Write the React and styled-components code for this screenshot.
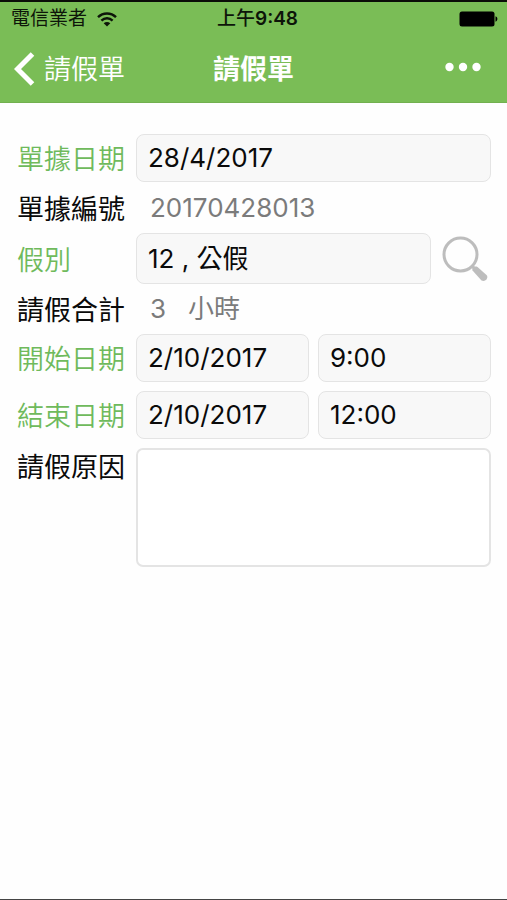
import { useState } from "react";
import styled, { createGlobalStyle } from "styled-components";

const GlobalStyle = createGlobalStyle`
  * {
    box-sizing: border-box;
  }

  body {
    margin: 0;
    background: #fefefe;
    font-family: Inter, "Noto Sans CJK TC", sans-serif;
    color: #0a0a0a;
  }

  input, textarea, button {
    font-family: inherit;
    color: inherit;
  }
`;

const Screen = styled.div`
  min-height: 100vh;
  border-top: 2px solid #0b0e08;
  border-bottom: 1px solid #444;
`;

const Header = styled.header`
  background: #7abd56;
  border-bottom: 1px solid #72b04f;
  color: white;
`;

const StatusBar = styled.div`
  display: grid;
  grid-template-columns: 1fr auto 1fr;
  align-items: center;
  height: 33px;
  padding: 0 9px 0 11px;
  color: #0d1509;
  font-size: 19px;
  line-height: 34px;
`;

const Carrier = styled.span`
  display: flex;
  align-items: center;
  gap: 10px;
`;

const Clock = styled.time`
  padding-left: 6px;
  font-weight: 500;
`;

const Digits = styled.span`
  font-weight: 600;
`;

const Battery = styled.svg`
  justify-self: end;
`;

const NavBar = styled.nav`
  display: grid;
  grid-template-columns: 1fr auto 1fr;
  align-items: center;
  height: 67px;
  padding: 0 14px;
`;

const BackLink = styled.a`
  display: flex;
  align-items: center;
  gap: 9px;
  padding-top: 2px;
  color: white;
  font-size: 27px;
  font-weight: 350;
  line-height: 40px;
  text-decoration: none;
`;

const Title = styled.h1`
  margin: 0;
  padding-top: 2px;
  font-size: 27px;
  font-weight: 700;
  line-height: 40px;
`;

const IconButton = styled.button`
  display: flex;
  justify-self: end;
  padding: 0;
  border: none;
  background: none;
  cursor: pointer;
`;

const MenuButton = styled(IconButton)`
  padding: 10px 12px 14px;
`;

const Form = styled.form`
  padding: 31px 16px 31px 17px;
`;

const Row = styled.div`
  display: grid;
  grid-template-columns: 110px minmax(0, 1fr);
  align-items: ${(props) => (props.$top ? "start" : "center")};
  gap: 9px;
  margin-bottom: ${(props) => (props.$gap ? 9 : 0)}px;
`;

const Label = styled.label`
  padding-top: 4px;
  color: ${(props) => (props.$required ? "#6fba5c" : "#0a0a0a")};
  font-size: 27px;
  font-weight: ${(props) => (props.$required ? 350 : 400)};
  line-height: 32px;
  white-space: nowrap;
`;

const Fields = styled.div`
  display: flex;
  align-items: center;
  gap: 9px;
`;

const Input = styled.input`
  flex: 1;
  width: 100%;
  min-width: 0;
  height: ${(props) => (props.$tall ? 51 : 48)}px;
  padding: 0 11px ${(props) => (props.$tall ? 4 : 2)}px;
  border: 1px solid #e4e4e4;
  border-radius: 8px;
  background: #f8f8f8;
  font-size: 26px;
  outline: none;
`;

const Value = styled.output`
  padding-left: 14px;
  color: #7b7b7b;
  font-size: 26px;
  font-weight: 400;
  line-height: ${(props) => (props.$short ? 50 : 51)}px;
  white-space: pre;
`;

const TextArea = styled.textarea`
  display: block;
  width: 100%;
  height: 119px;
  padding: 8px 11px;
  border: 2px solid #e4e4e4;
  border-radius: 7px;
  background: white;
  font-size: 26px;
  resize: none;
  outline: none;
`;

function WifiIcon() {
  return (
    <svg width="20" height="15" viewBox="0 0 20 15" fill="none" stroke="#0d1509" strokeWidth="2.4">
      <path d="M1 5.2C6 0.2 14 0.2 19 5.2" />
      <path d="M4.4 8.6C7.6 5.5 12.4 5.5 15.6 8.6" />
      <path d="M10 14.6L6.7 11.3C8.6 9.6 11.4 9.6 13.3 11.3Z" fill="#0d1509" stroke="none" />
    </svg>
  );
}

function BatteryIcon() {
  return (
    <Battery width="39" height="16" viewBox="0 0 39 16">
      <rect x="0.5" y="0.5" width="35" height="15" rx="2.5" fill="#000" />
      <path d="M36.5 5.3C39 6 39 10 36.5 10.7Z" fill="#000" />
    </Battery>
  );
}

function BackIcon() {
  return (
    <svg width="21" height="36" viewBox="0 0 21 36" fill="none" stroke="#fff" strokeWidth="5">
      <path d="M18.5 2L3.5 17L18.5 32" />
    </svg>
  );
}

function MoreIcon() {
  return (
    <svg width="36" height="10" viewBox="0 0 36 10" fill="#fff">
      <circle cx="4.5" cy="5" r="4.2" />
      <circle cx="18" cy="5" r="4.2" />
      <circle cx="31.5" cy="5" r="4.2" />
    </svg>
  );
}

function SearchIcon() {
  return (
    <svg width="51" height="48" viewBox="0 0 51 48" fill="none" stroke="#bdbdbd">
      <circle cx="20.5" cy="19.5" r="16.5" strokeWidth="3" />
      <path d="M32 31L36 35" strokeWidth="3" />
      <path
        d="M32.5 35.5C31.5 33 34.5 30.5 37.5 32L46.5 40C49 42.5 45.5 47.5 41.5 45.5Z"
        fill="#bdbdbd"
        stroke="none"
      />
    </svg>
  );
}

function App() {
  const [formData, setFormData] = useState({
    docDate: "28/4/2017",
    leaveType: "12 , 公假",
    startDate: "2/10/2017",
    startTime: "9:00",
    endDate: "2/10/2017",
    endTime: "12:00",
    reason: "",
  });

  function changeHandler(event) {
    setFormData({ ...formData, [event.target.name]: event.target.value });
  }

  function field(name) {
    return { id: name, name, value: formData[name], onChange: changeHandler };
  }

  return (
    <Screen>
      <GlobalStyle />
      <Header>
        <StatusBar>
          <Carrier>
            電信業者
            <WifiIcon />
          </Carrier>
          <Clock>
            上午<Digits>9:48</Digits>
          </Clock>
          <BatteryIcon />
        </StatusBar>
        <NavBar>
          <BackLink href="#back">
            <BackIcon />
            請假單
          </BackLink>
          <Title>請假單</Title>
          <MenuButton type="button" aria-label="更多">
            <MoreIcon />
          </MenuButton>
        </NavBar>
      </Header>

      <Form onSubmit={(event) => event.preventDefault()}>
        <Row>
          <Label htmlFor="docDate" $required>單據日期</Label>
          <Fields>
            <Input type="text" {...field("docDate")} />
          </Fields>
        </Row>
        <Row>
          <Label htmlFor="docNumber">單據編號</Label>
          <Value id="docNumber">20170428013</Value>
        </Row>
        <Row>
          <Label htmlFor="leaveType" $required>假別</Label>
          <Fields>
            <Input type="text" $tall {...field("leaveType")} />
            <IconButton type="button" aria-label="搜尋">
              <SearchIcon />
            </IconButton>
          </Fields>
        </Row>
        <Row>
          <Label htmlFor="total">請假合計</Label>
          <Value id="total" $short>{"3   小時"}</Value>
        </Row>
        <Row $gap>
          <Label htmlFor="startDate" $required>開始日期</Label>
          <Fields>
            <Input type="text" {...field("startDate")} />
            <Input type="text" aria-label="開始時間" {...field("startTime")} />
          </Fields>
        </Row>
        <Row $gap>
          <Label htmlFor="endDate" $required>結束日期</Label>
          <Fields>
            <Input type="text" {...field("endDate")} />
            <Input type="text" aria-label="結束時間" {...field("endTime")} />
          </Fields>
        </Row>
        <Row $top>
          <Label htmlFor="reason">請假原因</Label>
          <TextArea {...field("reason")} />
        </Row>
      </Form>
    </Screen>
  );
}

export default App;
